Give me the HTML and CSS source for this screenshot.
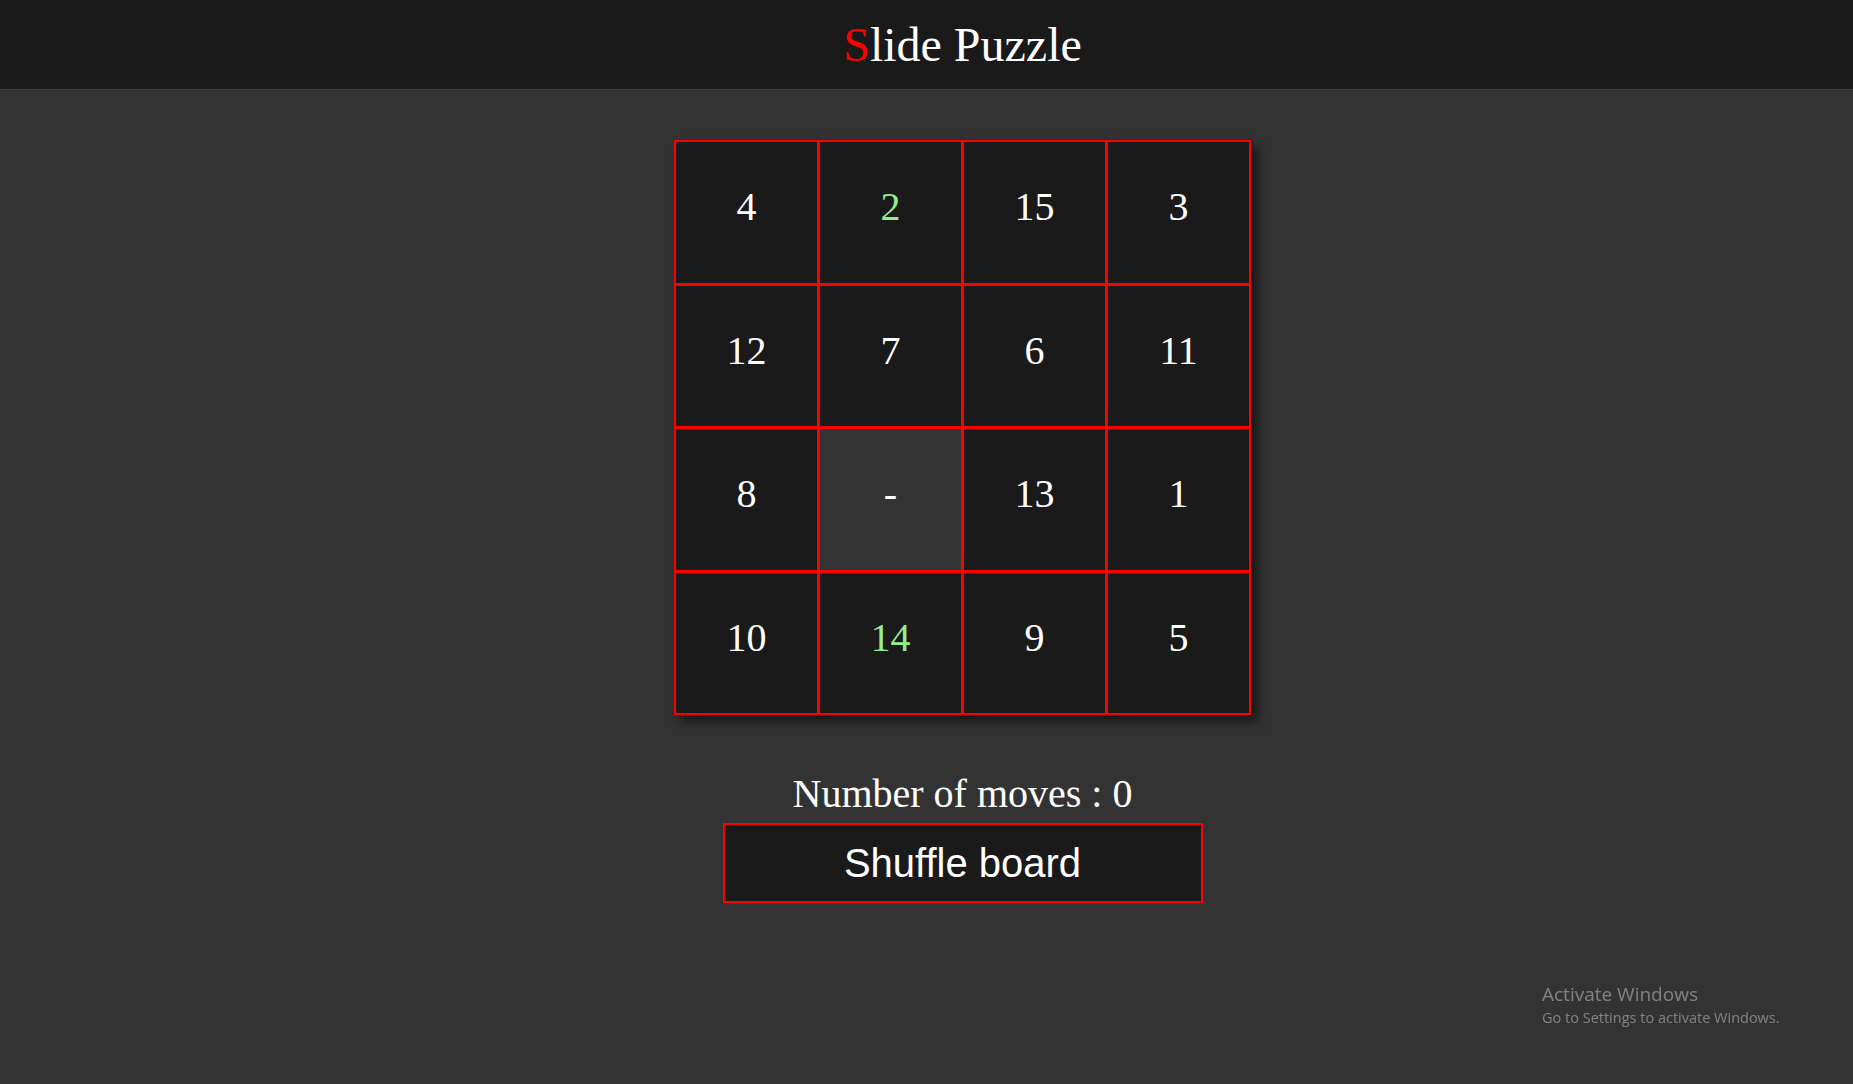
FILE: index.html
```html
<!DOCTYPE html>
<html lang="en">
<head>
<meta charset="utf-8">
<title>Slide Puzzle</title>
<link rel="stylesheet" href="styles.css">
</head>
<body>
<header class="topbar">
  <h1 class="title"><span class="title-accent">S</span>lide Puzzle</h1>
</header>
<main class="game">
  <div class="board">
    <div class="tile">4</div>
    <div class="tile tile-ok">2</div>
    <div class="tile">15</div>
    <div class="tile">3</div>
    <div class="tile">12</div>
    <div class="tile">7</div>
    <div class="tile">6</div>
    <div class="tile">11</div>
    <div class="tile">8</div>
    <div class="tile tile-empty">-</div>
    <div class="tile">13</div>
    <div class="tile">1</div>
    <div class="tile">10</div>
    <div class="tile tile-ok">14</div>
    <div class="tile">9</div>
    <div class="tile">5</div>
  </div>
  <p class="moves">Number of moves : 0</p>
  <button class="shuffle" type="button">Shuffle board</button>
</main>
<div class="activate">
  <div class="activate-title">Activate Windows</div>
  <div class="activate-sub">Go to Settings to activate Windows.</div>
</div>
</body>
</html>
```
FILE: styles.css
```css
html, body {
  margin: 0;
  padding: 0;
}
body {
  background: #333333;
  color: #ffffff;
  font-family: "Liberation Serif", "Times New Roman", serif;
  min-height: 1084px;
}
.topbar {
  height: 89px;
  background: #1a1a1a;
  box-shadow: 0 1px 1px #3e3e3e;
  display: flex;
  justify-content: center;
  padding-left: 72px;
}
.title {
  margin: 0;
  font-size: 48px;
  font-weight: normal;
  line-height: 89px;
}
.title-accent {
  color: #ff0000;
}
.game {
  display: flex;
  flex-direction: column;
  align-items: center;
  padding-left: 72px;
}
.board {
  margin-top: 51px;
  display: grid;
  grid-template-columns: repeat(4, 143px);
  grid-template-rows: repeat(4, 142.5px);
  gap: 1px;
  background: #ff0000;
  border: 1px solid #ff0000;
  box-shadow: 7px 7px 10px rgba(0, 0, 0, 0.55);
}
.tile {
  box-sizing: border-box;
  border: 1px solid #ff0000;
  background: #1a1a1a;
  display: flex;
  align-items: center;
  justify-content: center;
  padding-bottom: 11px;
  font-size: 40px;
  color: #ffffff;
}
.tile-ok {
  color: #90ee90;
}
.tile-empty {
  background: #333333;
}
.moves {
  margin: 56px 0 0;
  font-size: 40px;
  line-height: 46px;
}
.shuffle {
  margin-top: 6px;
  width: 480px;
  height: 80px;
  box-sizing: border-box;
  border: 2px solid #ff0000;
  background: #1a1a1a;
  color: #ffffff;
  font-family: "Liberation Sans", Arial, sans-serif;
  font-size: 40px;
  padding: 0;
}
.activate {
  position: fixed;
  left: 1542px;
  top: 982px;
  font-family: "Open Sans", "Noto Sans", sans-serif;
  color: rgba(255, 255, 255, 0.38);
}
.activate-title {
  font-size: 19px;
  line-height: 25px;
}
.activate-sub {
  font-size: 14.5px;
  line-height: 21px;
}
```
